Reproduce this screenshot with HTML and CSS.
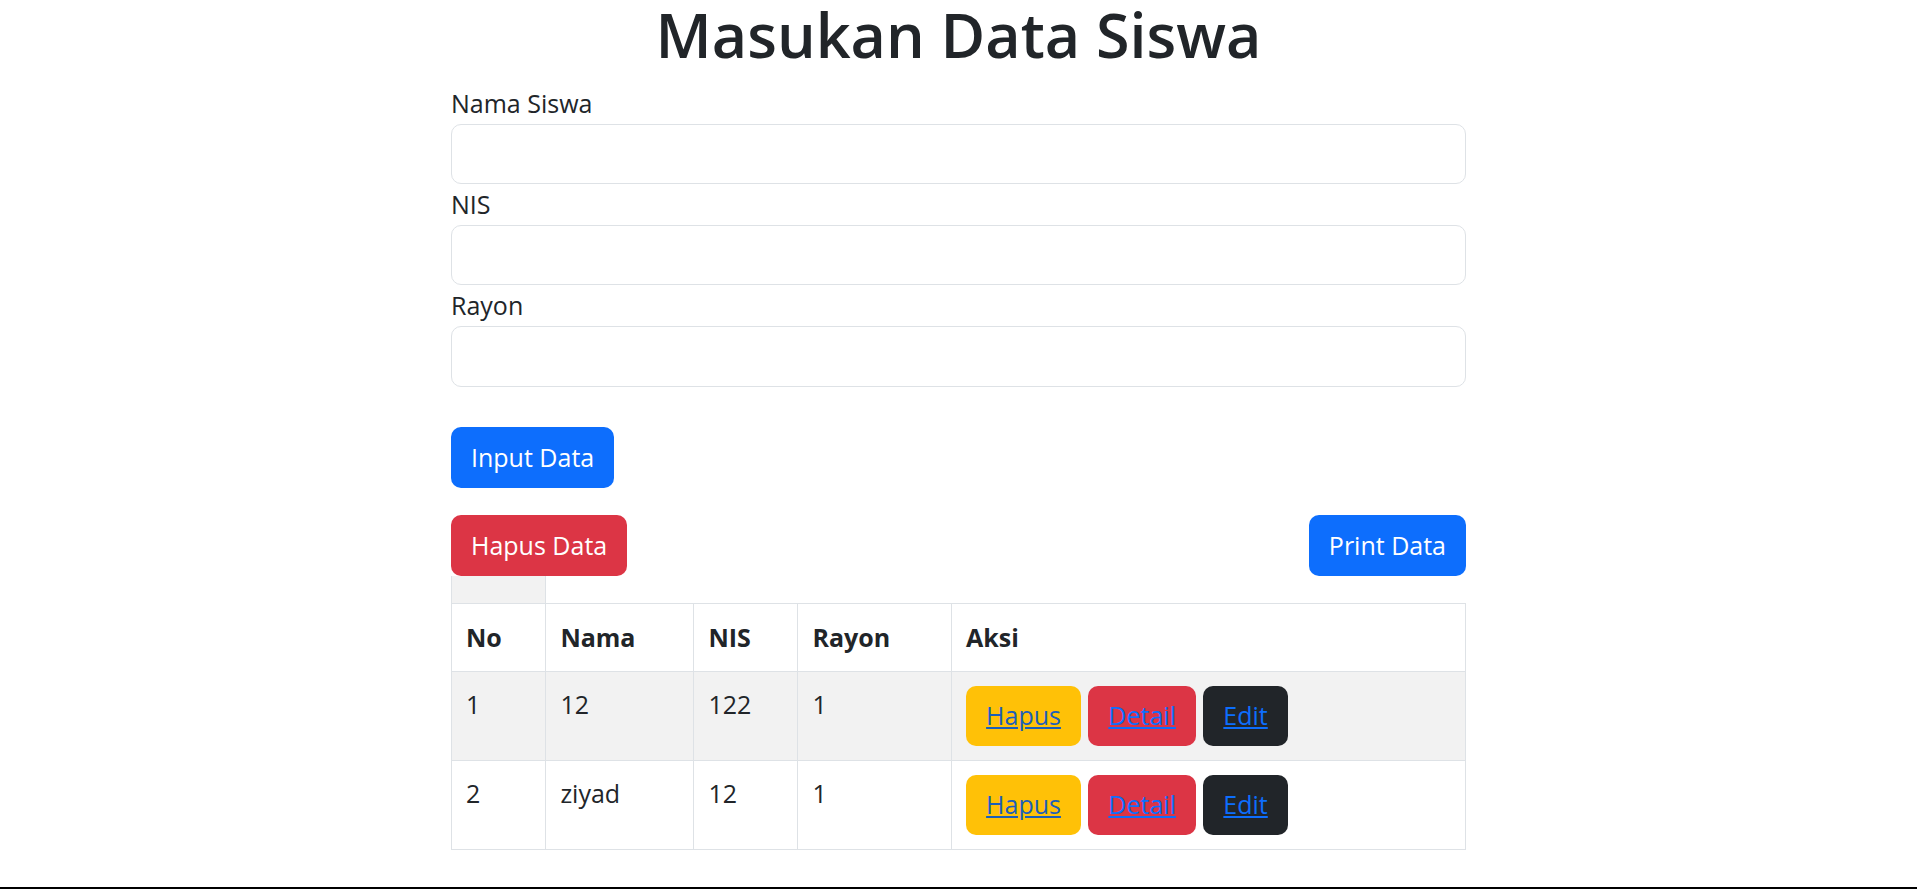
FILE: index.html
```html
<!DOCTYPE html>
<html lang="id">
<head>
<meta charset="utf-8">
<title>Masukan Data Siswa</title>
<link rel="stylesheet" href="styles.css">
</head>
<body>
<div class="page">
  <h1 class="title">Masukan Data Siswa</h1>
  <form class="form">
    <label class="label" for="nama">Nama Siswa</label>
    <input class="input" id="nama" type="text">
    <label class="label" for="nis">NIS</label>
    <input class="input" id="nis" type="text">
    <label class="label" for="rayon">Rayon</label>
    <input class="input" id="rayon" type="text">
    <div class="submit-row">
      <button type="button" class="btn btn-primary">Input Data</button>
    </div>
  </form>
  <div class="toolbar">
    <button type="button" class="btn btn-danger">Hapus Data</button>
    <button type="button" class="btn btn-primary">Print Data</button>
  </div>
  <table class="table">
    <colgroup>
      <col class="c-no"><col class="c-nama"><col class="c-nis"><col class="c-rayon"><col class="c-aksi">
    </colgroup>
    <tbody>
      <tr class="blank-row"><td class="blank"></td></tr>
      <tr class="head">
        <th>No</th><th>Nama</th><th>NIS</th><th>Rayon</th><th>Aksi</th>
      </tr>
      <tr class="odd">
        <td>1</td><td>12</td><td>122</td><td>1</td>
        <td><div class="actions">
          <button type="button" class="btn btn-warning"><a href="#">Hapus</a></button>
          <button type="button" class="btn btn-danger"><a href="#">Detail</a></button>
          <button type="button" class="btn btn-dark"><a href="#">Edit</a></button>
        </div></td>
      </tr>
      <tr>
        <td>2</td><td>ziyad</td><td>12</td><td>1</td>
        <td><div class="actions">
          <button type="button" class="btn btn-warning"><a href="#">Hapus</a></button>
          <button type="button" class="btn btn-danger"><a href="#">Detail</a></button>
          <button type="button" class="btn btn-dark"><a href="#">Edit</a></button>
        </div></td>
      </tr>
    </tbody>
  </table>
</div>
<div class="bottom-line"></div>
</body>
</html>
```
FILE: styles.css
```css
html, body {
  margin: 0;
  padding: 0;
  overflow: hidden;
}
body {
  display: flex;
  flex-direction: column;
  min-height: 100vh;
  font-family: "Open Sans", "Noto Sans", sans-serif;
  font-size: 25px;
  line-height: 1.5;
  color: #212529;
  background: #fff;
}
.page {
  width: 1015px;
  margin: 0 auto;
}
.title {
  margin: 0 0 12.3px;
  font-size: 61px;
  font-weight: 600;
  line-height: 70.4px;
  text-align: center;
}
.form {
  margin: 0;
}
.label {
  display: block;
  line-height: 40.8px;
}
.input {
  display: block;
  box-sizing: border-box;
  width: 100%;
  height: 60.5px;
  margin: 0;
  border: 1px solid #dee2e6;
  border-radius: 10px;
  background: #fff;
  font: inherit;
}
.submit-row {
  display: flex;
  margin-top: 40.8px;
}
.btn {
  box-sizing: border-box;
  display: inline-flex;
  align-items: center;
  justify-content: center;
  height: 60.6px;
  padding: 0 20px;
  border: 0;
  border-radius: 10px;
  font-family: inherit;
  font-size: 25px;
  line-height: 1.5;
  color: #fff;
  cursor: pointer;
}
.btn-primary { background: #0d6efd; }
.btn-danger { background: #dc3545; }
.btn-warning { background: #ffc107; }
.btn-dark { background: #212529; }
.btn a {
  color: #0d6efd;
  text-decoration: underline;
}
.btn-warning a { color: #1c5fb8; }
.toolbar {
  display: flex;
  justify-content: space-between;
  margin-top: 27.3px;
}
.table {
  width: 100%;
  border-collapse: collapse;
  table-layout: fixed;
}
.c-no { width: 94.4px; }
.c-nama { width: 148px; }
.c-nis { width: 104px; }
.c-rayon { width: 153.7px; }
.table th,
.table td {
  padding: 14px;
  border: 1px solid #dee2e6;
  text-align: left;
  vertical-align: top;
  line-height: 37.5px;
}
.table th {
  font-weight: 700;
  line-height: 38.4px;
}
.table .actions .btn {
  height: 60px;
}
.blank-row td.blank {
  height: 27.6px;
  padding: 0;
  border-top: 0;
  background: #f2f2f2;
}
.odd td {
  background: #f2f2f2;
}
.actions {
  display: flex;
  gap: 7.4px;
}
.bottom-line {
  margin-top: auto;
  height: 2px;
  background: #000;
}
```
